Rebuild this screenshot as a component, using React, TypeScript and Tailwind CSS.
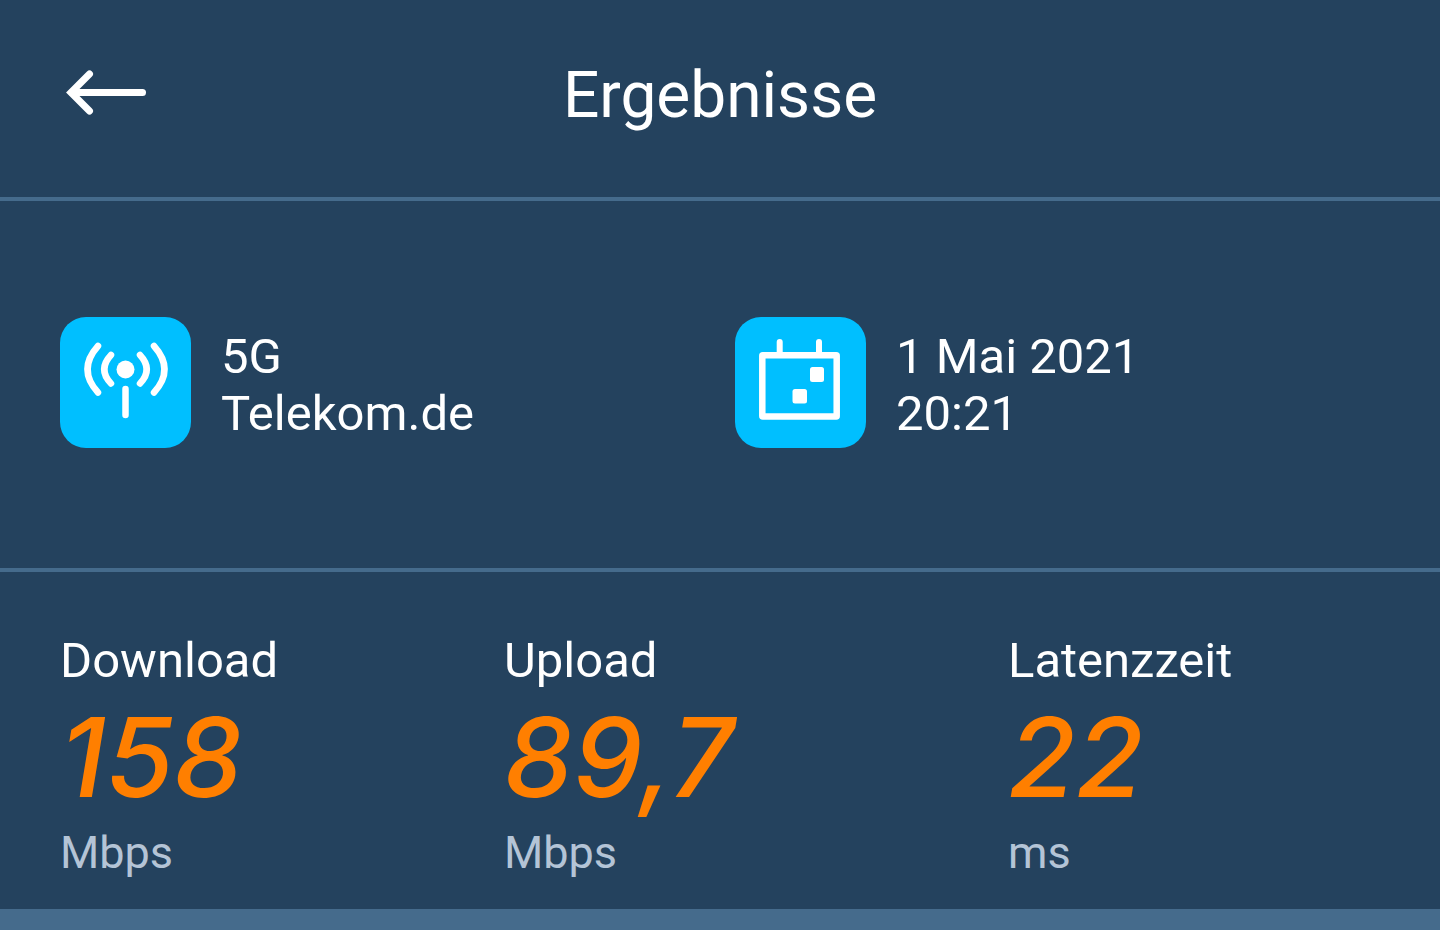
import type { ReactNode } from "react";

const results = [
  { label: "Download", value: "158", unit: "Mbps" },
  { label: "Upload", value: "89,7", unit: "Mbps" },
  { label: "Latenzzeit", value: "22", unit: "ms" },
];

function ArrowIcon() {
  return (
    <svg width="82" height="56" viewBox="0 0 82 56" fill="none" aria-hidden="true">
      <path d="M77.5 24.5H7" stroke="white" strokeWidth="7" strokeLinecap="round" />
      <path
        d="M24.5 6L6 24.5L24.5 43"
        stroke="white"
        strokeWidth="7"
        strokeLinecap="round"
        strokeLinejoin="miter"
      />
    </svg>
  );
}

function AntennaIcon() {
  return (
    <svg viewBox="0 0 131 131" className="size-full" fill="none" aria-hidden="true">
      <circle cx="65.5" cy="52.5" r="9" fill="white" />
      <path
        d="M65.5 72V98M51 38Q37.5 52.5 51 66.5M80 38Q93.5 52.5 80 66.5M38 29Q17 52.5 38 75.5M94 29Q115 52.5 94 75.5"
        stroke="white"
        strokeWidth="6.5"
        strokeLinecap="round"
      />
    </svg>
  );
}

function CalendarIcon() {
  return (
    <svg viewBox="0 0 131 131" className="size-full" fill="none" aria-hidden="true">
      <rect x="27.3" y="38.3" width="74.4" height="61.2" rx="0.5" stroke="white" strokeWidth="6.5" />
      <path d="M44.7 37V25M84 37V25" stroke="white" strokeWidth="6" strokeLinecap="round" />
      <rect x="75" y="50" width="14" height="15" rx="2.5" fill="white" />
      <rect x="57.5" y="72" width="14.5" height="14.5" rx="2.5" fill="white" />
    </svg>
  );
}

function InfoItem({ icon, lines }: { icon: ReactNode; lines: string[] }) {
  return (
    <div className="flex items-center gap-[30px]">
      <div className="size-[131px] shrink-0 rounded-[26px] bg-[#00bfff]">{icon}</div>
      <div className="pt-[4px] text-[49px] leading-[57px]">
        {lines.map((line) => (
          <p key={line}>{line}</p>
        ))}
      </div>
    </div>
  );
}

export default function App() {
  return (
    <div className="flex min-h-screen flex-col bg-[#456b8c] font-[Roboto,sans-serif] text-white">
      <header className="grid grid-cols-[1fr_auto_1fr] items-center border-b-4 border-[#456b8c] bg-[#24425e] px-[65px] pt-[58px] pb-[63px]">
        <button type="button" aria-label="Zurück" className="justify-self-start">
          <ArrowIcon />
        </button>
        <h1 className="text-[64px] leading-[76px]">Ergebnisse</h1>
      </header>

      <section className="grid grid-cols-2 gap-[30px] border-b-4 border-[#456b8c] bg-[#24425e] px-[60px] pt-[116px] pb-[120px]">
        <InfoItem icon={<AntennaIcon />} lines={["5G", "Telekom.de"]} />
        <InfoItem icon={<CalendarIcon />} lines={["1 Mai 2021", "20:21"]} />
      </section>

      <section className="grid grid-cols-[35%_35%_30%] bg-[#24425e] pt-[60px] pb-[28px]">
        {results.map((r) => (
          <div key={r.label} className="first:pl-[60px]">
            <h2 className="text-[49px] leading-[57px]">{r.label}</h2>
            <p className="font-[Inter,sans-serif] text-[110px] leading-[136px] font-medium text-[#ff7f00] italic">
              {r.value}
            </p>
            <p className="text-[45px] leading-[56px] text-[#b4c4d6]">{r.unit}</p>
          </div>
        ))}
      </section>
    </div>
  );
}
